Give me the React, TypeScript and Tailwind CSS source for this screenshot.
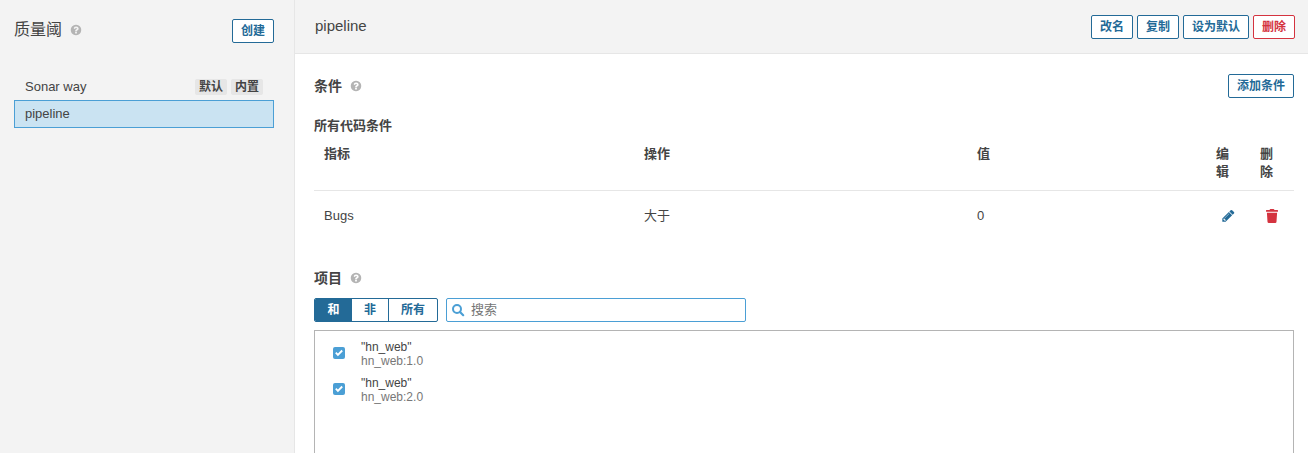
import React from 'react';

function HelpIcon() {
  return (
    <svg className="block shrink-0" width="12" height="12" viewBox="0 0 16 16" fill="#b4b4b4">
      <path d="M9.167 12.375v-1.75q0-.292-.292-.292h-1.75q-.292 0-.292.292v1.75q0 .292.292.292h1.75q.292 0 .292-.292zM11.5 6.25q0-.802-.506-1.486t-1.262-1.058T8.184 3.332q-2.169 0-3.309 1.902-.137.219.073.383l1.203.911q.064.055.173.055.146 0 .228-.109.474-.61.766-.821.301-.21.76-.21.428 0 .761.228t.333.524q0 .337-.178.543t-.606.401q-.565.255-1.035.784t-.47 1.139v.328q0 .292.292.292h1.75q.292 0 .292-.292 0-.173.196-.451t.497-.451q.292-.164.447-.26t.419-.319.406-.438.255-.551T11.5 6.25zM15 8q0 1.905-.939 3.514t-2.547 2.547T8 15t-3.514-.939-2.547-2.547T1 8t.939-3.514 2.547-2.547T8 1t3.514.939 2.547 2.547T15 8z" />
    </svg>
  );
}

function EditIcon() {
  return (
    <svg className="block" width="16" height="16" viewBox="0 0 16 16" fill="#236a97">
      <path d="M5.2 12.84l.7-.7-1.84-1.84-.7.7v.84h1v1h.84zM9.3 5.58q0-.17-.17-.17-.08 0-.14.05L4.74 9.7q-.06.06-.06.14 0 .17.17.17.08 0 .14-.05l4.25-4.24q.06-.06.06-.14zM8.87 4.06l3.27 3.27-6.53 6.53H2.33v-3.27zM14.24 4.82q0 .42-.29.71l-1.3 1.3-3.27-3.27 1.3-1.3q.28-.3.71-.3.42 0 .72.3l1.84 1.84q.29.3.29.72z" />
    </svg>
  );
}

function TrashIcon() {
  return (
    <svg className="block" width="16" height="16" viewBox="0 0 16 16" fill="#d4333f">
      <path d="M13.6 2H10.5l-.3-.6A.7.7 0 0 0 9.6 1H6.4a.7.7 0 0 0-.6.4L5.5 2H2.4a.4.4 0 0 0-.4.4v1c0 .3.2.4.4.4h11.2c.2 0 .4-.2.4-.4v-1a.4.4 0 0 0-.4-.4zM2.9 4.7h10.2l-.6 9.1A1.3 1.3 0 0 1 11.2 15H4.8a1.3 1.3 0 0 1-1.3-1.2z" />
    </svg>
  );
}

function SearchIcon() {
  return (
    <svg className="block shrink-0" width="14" height="14" viewBox="0 0 14 14" fill="none" stroke="#4b9fd5">
      <circle cx="6" cy="6" r="4" strokeWidth="2" />
      <path d="M9 9l3.2 3.2" strokeWidth="2.2" strokeLinecap="round" />
    </svg>
  );
}

function CheckedBox() {
  return (
    <span className="flex size-3 items-center justify-center rounded-[2px] bg-[#4b9fd5]">
      <svg width="8" height="8" viewBox="0 0 8 8" fill="none" stroke="#fff" strokeWidth="1.9">
        <path d="M.8 3.7l2.1 2.1L7.2 1.5" />
      </svg>
    </span>
  );
}

function Button({ children, danger = false }: { children: React.ReactNode; danger?: boolean }) {
  const tone = danger ? 'border-[#d4333f] text-[#d4333f]' : 'border-[#236a97] text-[#236a97]';
  return (
    <button className={`flex h-6 items-center justify-center rounded-[2px] border bg-white px-2 text-[12px] leading-[22px] font-semibold ${tone}`}>
      {children}
    </button>
  );
}

function Badge({ children }: { children: React.ReactNode }) {
  return <span className="h-4 rounded-[2px] bg-[#e6e6e6] px-1 text-[12px] leading-4 font-semibold">{children}</span>;
}

const projects = [
  { name: '"hn_web"', key: 'hn_web:1.0' },
  { name: '"hn_web"', key: 'hn_web:2.0' },
];

export default function App() {
  return (
    <div className="flex h-[453px] overflow-hidden bg-white font-['Liberation_Sans','Noto_Sans_CJK_SC',sans-serif] text-[13px] leading-[18px] text-[#444]">
      <aside className="w-[295px] shrink-0 border-r border-[#e6e6e6] bg-[#f3f3f3] pt-[19px] pr-5 pl-3.5">
        <div className="flex h-6 items-start justify-between">
          <div className="flex items-center gap-2">
            <h1 className="text-[16px] leading-[22px]">质量阈</h1>
            <HelpIcon />
          </div>
          <Button>创建</Button>
        </div>
        <nav className="mt-[29px]">
          <a className="flex h-7 items-center justify-between border border-transparent px-2.5 pt-px">
            <span>Sonar way</span>
            <span className="flex gap-1">
              <Badge>默认</Badge>
              <Badge>内置</Badge>
            </span>
          </a>
          <a className="flex h-7 items-center border border-[#4b9fd5] bg-[#cae3f2] px-2.5">pipeline</a>
        </nav>
      </aside>

      <main className="min-w-0 flex-1">
        <header className="flex h-[54px] items-center justify-between border-b border-[#e6e6e6] bg-[#f3f3f3] pr-[13px] pl-5">
          <h2 className="pb-0.5 text-[15px]">pipeline</h2>
          <div className="flex gap-1">
            <Button>改名</Button>
            <Button>复制</Button>
            <Button>设为默认</Button>
            <Button danger>删除</Button>
          </div>
        </header>

        <div className="pt-5 pr-3.5 pl-[19px]">
          <div className="flex h-6 items-center justify-between">
            <div className="flex items-center gap-2">
              <h3 className="text-[14px] font-semibold">条件</h3>
              <HelpIcon />
            </div>
            <Button>添加条件</Button>
          </div>

          <h4 className="mt-[19px] font-semibold">所有代码条件</h4>
          <table className="mt-px w-full table-fixed border-collapse">
            <colgroup>
              <col className="w-[320px]" />
              <col className="w-[333px]" />
              <col />
              <col className="w-11" />
              <col className="w-11" />
            </colgroup>
            <thead>
              <tr className="h-[54px] border-b border-[#e6e6e6] text-left align-top">
                <th className="px-2.5 pt-[9px] font-semibold">指标</th>
                <th className="px-2.5 pt-[9px] font-semibold">操作</th>
                <th className="px-2.5 pt-[9px] font-semibold">值</th>
                <th className="px-2.5 pt-[9px] font-semibold"><span className="block w-[13px] break-all">编辑</span></th>
                <th className="px-2.5 pt-[9px] font-semibold"><span className="block w-[13px] break-all">删除</span></th>
              </tr>
            </thead>
            <tbody>
              <tr className="h-[51px]">
                <td className="px-2.5">Bugs</td>
                <td className="px-2.5">大于</td>
                <td className="px-2.5">0</td>
                <td className="pl-3.5"><EditIcon /></td>
                <td className="pl-3.5"><TrashIcon /></td>
              </tr>
            </tbody>
          </table>

          <div className="mt-7 flex items-center gap-2">
            <h3 className="text-[14px] font-semibold">项目</h3>
            <HelpIcon />
          </div>

          <div className="mt-[11px] flex gap-2">
            <div className="flex h-6 w-[124px] overflow-hidden rounded-[2px] border border-[#236a97] text-center text-[12px] leading-[22px] font-semibold text-[#236a97]">
              <span className="w-[37px] bg-[#236a97] text-white">和</span>
              <span className="w-[37px] border-r border-[#236a97]">非</span>
              <span className="flex-1">所有</span>
            </div>
            <div className="flex h-6 w-[300px] items-center gap-1.5 rounded-[2px] border border-[#4b9fd5] pl-1">
              <SearchIcon />
              <span className="text-[#757575]">搜索</span>
            </div>
          </div>

          <ul className="mt-2 h-[200px] border border-[#b4b4b4] pt-1">
            {projects.map((project) => (
              <li key={project.key} className="flex h-9 items-center pl-[18px] text-[12px] leading-[14px]">
                <CheckedBox />
                <div className="ml-4 pt-0.5">
                  <div>{project.name}</div>
                  <div className="text-[#777]">{project.key}</div>
                </div>
              </li>
            ))}
          </ul>
        </div>
      </main>
    </div>
  );
}
